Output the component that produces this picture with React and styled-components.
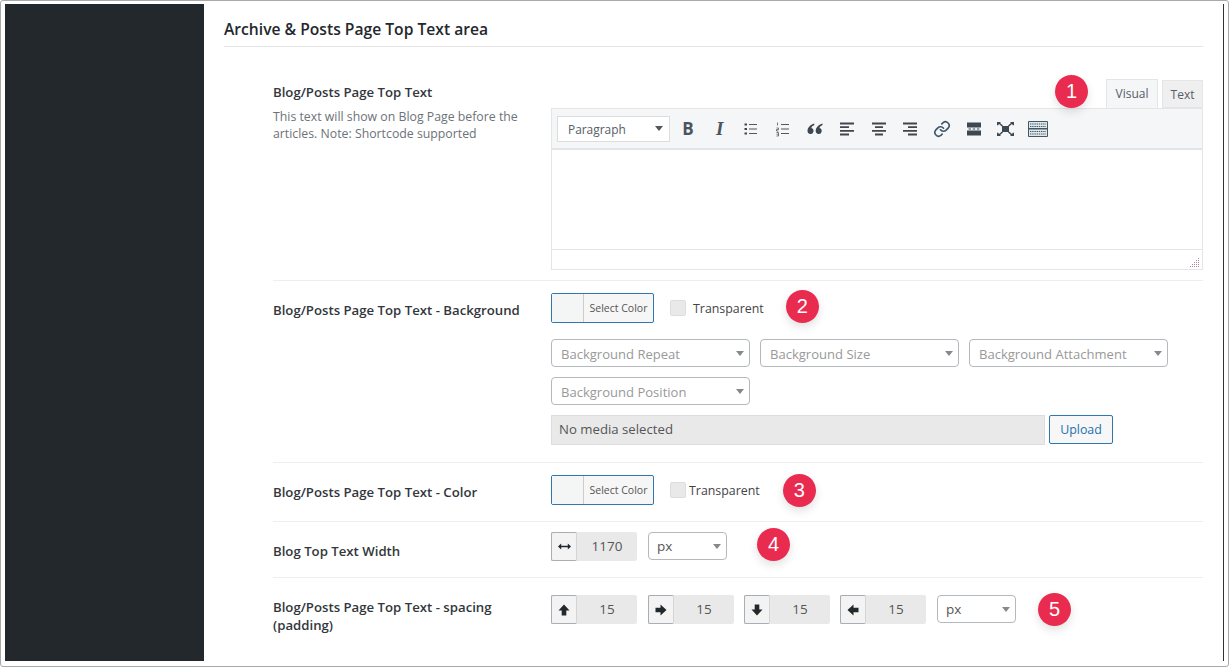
import React from 'react';
import styled, { createGlobalStyle } from 'styled-components';

const GlobalStyle = createGlobalStyle`
  html, body { margin: 0; padding: 0; background: #fff; }
  body { font-family: "Open Sans", "Noto Sans", sans-serif; color: #32373c; }
`;

const Frame = styled.div`
  width: 1229px;
  height: 667px;
  box-sizing: border-box;
  border: 1px solid #a9a9a9;
  border-radius: 3px;
  padding: 3px 4px 5px 4px;
  display: flex;
  overflow: hidden;
`;

const Sidebar = styled.div`
  width: 199px;
  flex: none;
  background: #23282d;
`;

const Main = styled.div`
  flex: 1;
  padding: 0 20px;
`;

const EdgeLine = styled.div`
  width: 1px;
  flex: none;
  background: #333;
`;

const Heading = styled.h2`
  margin: 0;
  height: 43px;
  padding-top: 14px;
  box-sizing: border-box;
  border-bottom: 1px solid #e5e5e5;
  font-size: 15.65px;
  line-height: 22px;
  font-weight: 600;
  color: #23282d;
`;

const Rows = styled.div`
  padding-left: 49px;
`;

const Row = styled.div`
  display: flex;
  height: ${p => p.$h}px;
  box-sizing: border-box;
  border-bottom: ${p => (p.$last ? 'none' : '1px solid #eee')};
  padding-top: ${p => p.$top}px;
`;

const LabelCol = styled.div`
  width: 278px;
  flex: none;
  padding-top: ${p => p.$top || 0}px;
`;

const Label = styled.div`
  font-size: 13.2px;
  line-height: 18px;
  font-weight: 600;
  color: #32373c;
`;

const Help = styled.div`
  margin-top: 7px;
  font-size: 12.3px;
  line-height: 17px;
  color: #6c7278;
  width: 255px;
`;

const FieldCol = styled.div`
  flex: 1;
  min-width: 0;
`;

const Inline = styled.div`
  display: flex;
  align-items: center;
  height: ${p => p.$h || 30}px;
`;

const EditorTop = styled.div`
  display: flex;
  justify-content: flex-end;
  align-items: flex-end;
  height: 29px;
  gap: 4px;
  position: relative;
  z-index: 1;
`;

const Tab = styled.div`
  height: ${p => (p.$active ? 29 : 28)}px;
  width: ${p => (p.$active ? 52 : 41)}px;
  box-sizing: border-box;
  border: 1px solid #e5e5e5;
  border-bottom: ${p => (p.$active ? '1px solid #f5f6f7' : '1px solid #e5e5e5')};
  background: ${p => (p.$active ? '#f5f6f7' : '#efefef')};
  font-size: 12px;
  line-height: 27px;
  text-align: center;
  color: #555d66;
`;

const Editor = styled.div`
  border: 1px solid #e5e5e5;
  height: 162px;
  box-sizing: border-box;
  display: flex;
  flex-direction: column;
`;

const Toolbar = styled.div`
  height: 41px;
  flex: none;
  box-sizing: border-box;
  background: #f5f6f7;
  border-bottom: 2px solid #e2e4e7;
  display: flex;
  align-items: center;
  padding-left: 5px;
`;

const FormatSelect = styled.div`
  width: 113px;
  height: 26px;
  box-sizing: border-box;
  border: 1px solid #ddd;
  background: #fff;
  display: flex;
  align-items: center;
  justify-content: space-between;
  padding: 0 6px 0 10px;
  font-size: 11.9px;
  color: #555d66;
  margin-right: 2px;
`;

const ToolIcon = styled.span`
  width: 31.8px;
  height: 26px;
  flex: none;
  display: flex;
  align-items: center;
  justify-content: center;
  color: #40464d;
`;

const BoldGlyph = styled.span`
  font-family: "Open Sans", sans-serif;
  font-weight: 700;
  font-size: 17px;
  color: #4a545e;
`;

const ItalicGlyph = styled.span`
  font-family: "Liberation Serif", serif;
  font-style: italic;
  font-weight: 700;
  font-size: 19px;
  color: #4a545e;
`;

const EditArea = styled.div`
  flex: 1;
`;

const StatusBar = styled.div`
  height: 20px;
  flex: none;
  box-sizing: border-box;
  border-top: 1px solid #e5e5e5;
  display: flex;
  justify-content: flex-end;
  align-items: flex-end;
  padding: 0 2px 2px 0;
`;

const ColorButton = styled.div`
  width: 103px;
  height: 30px;
  box-sizing: border-box;
  border: 1px solid #2f77b0;
  border-radius: 2px;
  background: #f6f6f6;
  display: flex;
  flex: none;
`;

const Swatch = styled.div`
  width: 31px;
  background: #f4f6f6;
  border-right: 1px solid #ccc;
`;

const ColorText = styled.div`
  flex: 1;
  text-align: center;
  font-size: 10.5px;
  line-height: 28px;
  color: #555;
`;

const Check = styled.span`
  width: 16px;
  height: 16px;
  box-sizing: border-box;
  border: 1px solid #ddd;
  border-radius: 2px;
  background: #e9e9e9;
  margin-left: ${p => p.$ml}px;
  flex: none;
`;

const CheckText = styled.span`
  margin-left: ${p => p.$ml}px;
  font-size: 12.4px;
  color: #444;
`;

const Badge = styled.span`
  width: 33px;
  height: 33px;
  flex: none;
  border-radius: 50%;
  background: #ea2b50;
  color: #fff;
  font-family: "Liberation Sans", Arial, sans-serif;
  font-size: 20px;
  display: flex;
  align-items: center;
  justify-content: center;
  box-shadow: 0 4px 10px rgba(0, 0, 0, 0.12);
  margin-left: ${p => p.$ml || 0}px;
  margin-bottom: ${p => p.$mb || 0}px;
`;

const TabBadge = styled(Badge)`
  position: absolute;
  right: 115px;
  top: -4px;
`;

const SelectBox = styled.div`
  width: ${p => p.$w}px;
  height: 28px;
  flex: none;
  align-self: flex-start;
  box-sizing: border-box;
  border: 1px solid #b4b9be;
  border-radius: 4px;
  background: #fff;
  display: flex;
  align-items: center;
  justify-content: space-between;
  padding: ${p => (p.$value ? '0 5px 0 8px' : '1px 5px 0 9px')};
  font-size: ${p => (p.$value ? 13.5 : 13.05)}px;
  color: ${p => (p.$value ? '#555' : '#999')};
`;

const Caret = styled.span`
  width: 0;
  height: 0;
  border-left: 4px solid transparent;
  border-right: 4px solid transparent;
  border-top: 5px solid ${p => p.$dark || '#888'};
`;

const SelectWrap = styled.div`
  display: flex;
  flex-wrap: wrap;
  gap: 10px;
  width: 640px;
  margin-top: 16px;
`;

const MediaRow = styled.div`
  display: flex;
  margin-top: 10px;
`;

const MediaField = styled.div`
  width: 494px;
  height: 30px;
  box-sizing: border-box;
  background: #e9e9e9;
  border: 1px solid #ddd;
  font-size: 13.2px;
  line-height: 27px;
  padding-left: 7px;
  color: #555;
`;

const UploadButton = styled.div`
  margin-left: 4px;
  width: 64px;
  height: 29px;
  box-sizing: border-box;
  border: 1px solid #2f77b0;
  border-radius: 2px;
  background: #f7f7f7;
  color: #2271b1;
  font-size: 12.4px;
  line-height: 27px;
  text-align: center;
`;

const NumberBox = styled.div`
  width: 86px;
  height: 29px;
  box-sizing: border-box;
  flex: none;
  display: flex;
  border-radius: 2px;
  background: #e9e9e9;
  margin-right: ${p => p.$mr || 0}px;
`;

const NumberIcon = styled.span`
  width: 26px;
  flex: none;
  box-sizing: border-box;
  display: flex;
  align-items: center;
  justify-content: center;
  background: #f3f3f3;
  border: 1px solid #a9aeb4;
  border-right-color: #d5d5d5;
  border-radius: 2px;
  color: #23282d;
`;

const NumberValue = styled.span`
  flex: 1;
  text-align: center;
  font-size: 13.5px;
  line-height: 28px;
  color: #555;
`;

const Stroke = ({ children, size = 16 }) => (
  <svg width={size} height={size} viewBox="0 0 16 16" fill="none" stroke="currentColor" strokeWidth="1.8">
    {children}
  </svg>
);

const ToolbarIcons = [
  <BoldGlyph>B</BoldGlyph>,
  <ItalicGlyph>I</ItalicGlyph>,
  <Stroke key="ul">
    <path d="M6 3.500h8M6 8h8M6 12.500h8" strokeWidth=".9" />
    <path d="M1.500 3.500h2.500M1.500 8h2.500M1.500 12.500h2.500" strokeWidth="2.200" />
  </Stroke>,
  <Stroke key="ol">
    <path d="M6 3.500h8M6 8h8M6 12.500h8" strokeWidth=".9" />
    <path d="M2.500 1.500v3M1.500 7h2v1.500h-2V10h2M1.500 11.500h2v3.500h-2M1.500 13.200h2" strokeWidth=".7" />
  </Stroke>,
  <svg key="q" width="16" height="16" viewBox="0 0 16 16" fill="#3d4852">
    <path d="M7.300 2.500C3.200 4 .5 6.500.5 10a3 3 0 1 0 3.800-3c.2-1.300 1.400-2.300 3-3.100zM15.500 2.500c-4.100 1.500-6.800 4-6.800 7.500a3 3 0 1 0 3.800-3c.2-1.300 1.400-2.300 3-3.100z" />
  </svg>,
  <Stroke key="al"><path d="M1 2.500h14M1 6.200h9M1 9.900h14M1 13.500h9" /></Stroke>,
  <Stroke key="ac"><path d="M1 2.500h14M4 6.200h8M1 9.900h14M4 13.500h8" /></Stroke>,
  <Stroke key="ar"><path d="M1 2.500h14M6 6.200h9M1 9.900h14M6 13.500h9" /></Stroke>,
  <svg key="link" width="18" height="18" viewBox="0 0 24 24" fill="none" stroke="#3d566c" strokeWidth="2.200" strokeLinecap="round">
    <path d="M10 13a5 5 0 0 0 7.500.500l3-3a5 5 0 0 0-7-7l-1.700 1.700" />
    <path d="M14 11a5 5 0 0 0-7.500-.500l-3 3a5 5 0 0 0 7 7l1.700-1.700" />
  </svg>,
  <svg key="more" width="16" height="16" viewBox="0 0 16 16" fill="#3d4852">
    <path d="M1 1.500h14v5H1zM1 9.500h14v5H1z" />
    <path d="M2.500 7.500h2.500v1H2.500zM6.700 7.500h2.500v1H6.700zM10.900 7.500h2.500v1h-2.500z" />
  </svg>,
  <svg key="full" width="17" height="14" viewBox="0 0 17 14" fill="#3d4852">
    <path d="M5 4h7v6H5z" />
    <path d="M0 0h4L3 1.100 6 3.500 5 4.500 2 2.100 1.200 3.200H0zM17 0v3.200h-1.200L15 2.100 12 4.500 11 3.500 14 1.100 13 0zM0 14v-3.200h1.200L2 11.900 5 9.500 6 10.500 3 12.900 4 14zM17 14h-4l1-1.100L11 10.500 12 9.500 15 11.900 15.800 10.800H17z" />
  </svg>,
  <svg key="kb" width="20" height="16" viewBox="0 0 20 16" fill="none">
    <path d="M.5.500h19v15H.500z" stroke="#4a565e" fill="#dce8ef" />
    <path d="M.5 7.800h19" stroke="#4a565e" strokeWidth="1.500" />
    <path d="M2 3h16M2 5.500h16M2 10.500h16M2 13h16" stroke="#4a565e" strokeWidth="1.200" strokeDasharray="1.400 .8" />
  </svg>,
];

const Grip = () => (
  <svg width="10" height="10" viewBox="0 0 10 10" fill="#b58aa5">
    <path d="M8 1h1v1H8zM6 3h1v1H6zM8 3h1v1H8zM4 5h1v1H4zM6 5h1v1H6zM8 5h1v1H8zM2 7h1v1H2zM4 7h1v1H4zM6 7h1v1H6zM8 7h1v1H8zM0 9h1v1H0zM2 9h1v1H2zM4 9h1v1H4zM6 9h1v1H6zM8 9h1v1H8z" />
  </svg>
);

// fat arrow pointing up, rotated for the other sides
const FatArrow = ({ rotate = 0 }) => (
  <svg width="12" height="12" viewBox="0 0 12 12" fill="currentColor" transform={`rotate(${rotate})`}>
    <path d="M6 .5 11.500 6.500H8.300V11.500H3.700V6.500H.5z" />
  </svg>
);

const WidthArrow = () => (
  <svg width="13" height="9" viewBox="0 0 13 9" fill="currentColor">
    <path d="M0 4.500 3.200 1.500V3.700H9.800V1.500L13 4.500 9.800 7.500V5.300H3.200V7.500z" />
  </svg>
);

const NumberField = ({ icon, value, mr }) => (
  <NumberBox $mr={mr}>
    <NumberIcon>{icon}</NumberIcon>
    <NumberValue>{value}</NumberValue>
  </NumberBox>
);

const App = () => (
  <Frame>
    <GlobalStyle />
    <Sidebar />
    <Main>
      <Heading>Archive &amp; Posts Page Top Text area</Heading>
      <Rows>
        <Row $h={234} $top={32}>
          <LabelCol $top={4}>
            <Label>Blog/Posts Page Top Text</Label>
            <Help>This text will show on Blog Page before the articles. Note: Shortcode supported</Help>
          </LabelCol>
          <FieldCol>
            <EditorTop>
              <TabBadge>1</TabBadge>
              <Tab $active>Visual</Tab>
              <Tab>Text</Tab>
            </EditorTop>
            <Editor>
              <Toolbar>
                <FormatSelect>Paragraph<Caret $dark="#555" /></FormatSelect>
                {ToolbarIcons.map((icon, i) => <ToolIcon key={i}>{icon}</ToolIcon>)}
              </Toolbar>
              <EditArea />
              <StatusBar><Grip /></StatusBar>
            </Editor>
          </FieldCol>
        </Row>
        <Row $h={182} $top={12}>
          <LabelCol $top={8}><Label>Blog/Posts Page Top Text - Background</Label></LabelCol>
          <FieldCol>
            <Inline>
              <ColorButton><Swatch /><ColorText>Select Color</ColorText></ColorButton>
              <Check $ml={16} />
              <CheckText $ml={7}>Transparent</CheckText>
              <Badge $ml={22} $mb={4}>2</Badge>
            </Inline>
            <SelectWrap>
              <SelectBox $w={199}>Background Repeat<Caret /></SelectBox>
              <SelectBox $w={199}>Background Size<Caret /></SelectBox>
              <SelectBox $w={199}>Background Attachment<Caret /></SelectBox>
              <SelectBox $w={199}>Background Position<Caret /></SelectBox>
            </SelectWrap>
            <MediaRow>
              <MediaField>No media selected</MediaField>
              <UploadButton>Upload</UploadButton>
            </MediaRow>
          </FieldCol>
        </Row>
        <Row $h={59} $top={12}>
          <LabelCol $top={8}><Label>Blog/Posts Page Top Text - Color</Label></LabelCol>
          <FieldCol>
            <Inline>
              <ColorButton><Swatch /><ColorText>Select Color</ColorText></ColorButton>
              <Check $ml={16} />
              <CheckText $ml={3}>Transparent</CheckText>
              <Badge $ml={23}>3</Badge>
            </Inline>
          </FieldCol>
        </Row>
        <Row $h={56} $top={10}>
          <LabelCol $top={10}><Label>Blog Top Text Width</Label></LabelCol>
          <FieldCol>
            <Inline $h={29}>
              <NumberField icon={<WidthArrow />} value="1170" mr={11} />
              <SelectBox $w={79} $value>px<Caret /></SelectBox>
              <Badge $ml={30} $mb={5}>4</Badge>
            </Inline>
          </FieldCol>
        </Row>
        <Row $h={80} $top={17} $last>
          <LabelCol $top={3}><Label>Blog/Posts Page Top Text - spacing<br />(padding)</Label></LabelCol>
          <FieldCol>
            <Inline $h={29}>
              <NumberField icon={<FatArrow />} value="15" mr={11} />
              <NumberField icon={<FatArrow rotate={90} />} value="15" mr={10} />
              <NumberField icon={<FatArrow rotate={180} />} value="15" mr={10} />
              <NumberField icon={<FatArrow rotate={270} />} value="15" mr={11} />
              <SelectBox $w={79} $value>px<Caret /></SelectBox>
              <Badge $ml={22}>5</Badge>
            </Inline>
          </FieldCol>
        </Row>
      </Rows>
    </Main>
    <EdgeLine />
  </Frame>
);

export default App;
